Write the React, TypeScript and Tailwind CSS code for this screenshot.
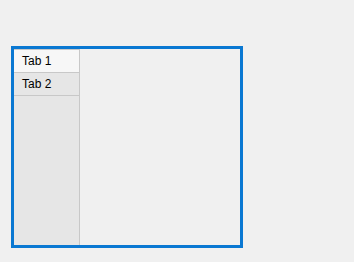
export default function App() {
  const tabs = ['Tab 1', 'Tab 2'];
  return (
    <div className="w-[354px] h-[262px] bg-[#f0f0f0] pt-[46px] pl-[11px]" style={{ fontFamily: '"Liberation Sans", Arial, sans-serif' }}>
      <div className="w-[232px] h-[202px] border-[3px] border-[#0a78d2] flex">
        <div className="w-[66px] h-full bg-[#e6e6e6] border-t border-r border-[#c8c8c8] flex flex-col">
          {tabs.map((t, i) => (
            <div
              key={t}
              className={`h-[23px] border-b border-[#c8c8c8] pl-[8px] flex items-center text-[12px] text-black ${i === 0 ? 'bg-[#f7f7f7]' : 'bg-[#e6e6e6]'}`}
            >
              {t}
            </div>
          ))}
        </div>
        <div className="flex-1 bg-[#f0f0f0]" />
      </div>
    </div>
  );
}
